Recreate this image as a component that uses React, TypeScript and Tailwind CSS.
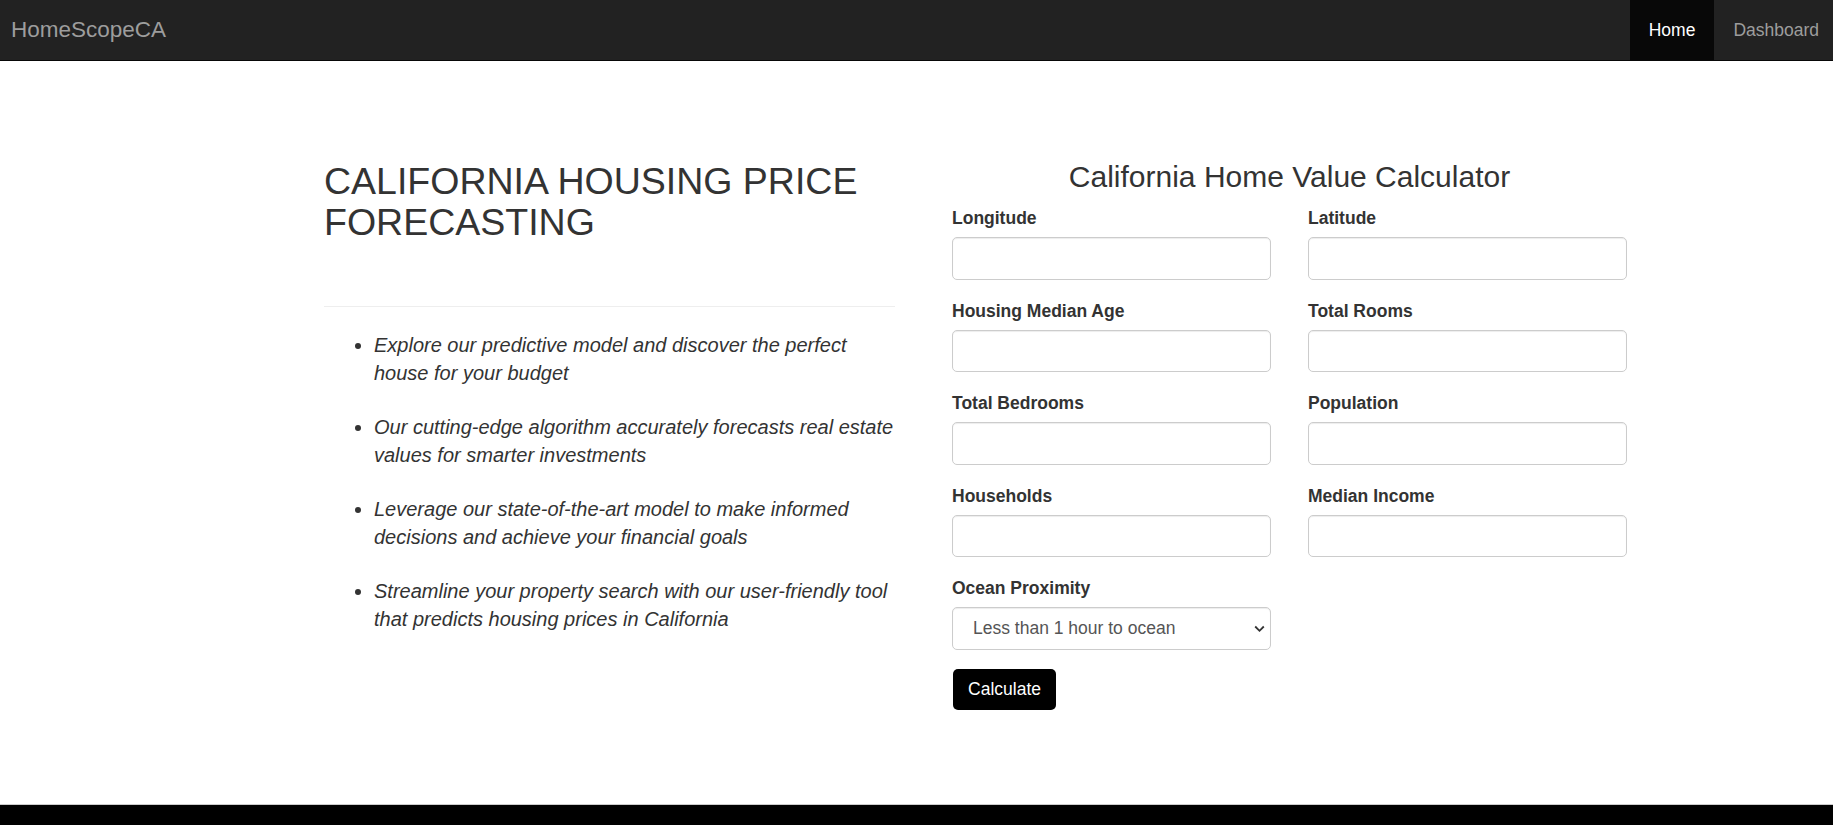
import React from "react";

const fields: [string, string][] = [
  ["Longitude", "Latitude"],
  ["Housing Median Age", "Total Rooms"],
  ["Total Bedrooms", "Population"],
  ["Households", "Median Income"],
];

function Field({ label }: { label: string }) {
  return (
    <div className="mb-[18.75px] w-[319px]">
      <label className="block text-[17.5px] leading-[25px] font-bold text-[#333] mb-[6.25px]">
        {label}
      </label>
      <input
        type="text"
        className="block w-full h-[42.5px] border border-[#ccc] rounded-[5px] bg-white shadow-[inset_0_1px_1px_rgba(0,0,0,0.075)] outline-none px-[15px] text-[17.5px]"
      />
    </div>
  );
}

const bullets: [string, string][] = [
  ["Explore our predictive model and discover the perfect", "house for your budget"],
  ["Our cutting-edge algorithm accurately forecasts real estate", "values for smarter investments"],
  ["Leverage our state-of-the-art model to make informed", "decisions and achieve your financial goals"],
  ["Streamline your property search with our user-friendly tool", "that predicts housing prices in California"],
];

export default function App() {
  return (
    <div className="w-full min-h-screen bg-white font-['Liberation_Sans',Arial,sans-serif] text-[#333] overflow-hidden">
      <nav className="h-[61px] bg-[#222] border-b border-[#080808] flex items-stretch justify-between">
        <div className="flex items-center pl-[11px] text-[22.5px] text-[#9d9d9d]">HomeScopeCA</div>
        <div className="flex items-stretch text-[17.5px]">
          <a className="flex items-center px-[19px] bg-[#080808] text-white">Home</a>
          <a className="flex items-center pl-[19px] pr-[14px] text-[#9d9d9d]">Dashboard</a>
        </div>
      </nav>

      <main className="h-[743px] flex pt-[100px] pl-[322px]">
        <div className="w-[573px]">
          <h1 className="text-[37.5px] leading-[41px] font-normal text-[#333] pl-[2px]">
            CALIFORNIA HOUSING PRICE FORECASTING
          </h1>
          <hr className="mt-[63px] ml-[2px] border-0 border-t border-[#eee]" />
          <ul className="list-disc pl-[52px] mt-[23.5px] italic text-[20px] leading-[28px] text-[#333]">
            {bullets.map(([a, b]) => (
              <li key={a} className="mb-[26px] whitespace-nowrap">
                {a}
                <br />
                {b}
              </li>
            ))}
          </ul>
        </div>

        <div className="ml-[57px] w-[675px]">
          <h2 className="-mt-[1px] text-[30px] leading-[33px] font-normal text-center text-[#333] mb-[13px]">
            California Home Value Calculator
          </h2>
          {fields.map(([a, b]) => (
            <div key={a} className="flex gap-[37px]">
              <Field label={a} />
              <Field label={b} />
            </div>
          ))}
          <div className="mb-[19px] w-[319px]">
            <label className="block text-[17.5px] leading-[25px] font-bold text-[#333] mb-[6.25px]">
              Ocean Proximity
            </label>
            <div className="relative">
              <select
                defaultValue="a"
                className="block w-full h-[42.5px] appearance-none border border-[#ccc] rounded-[5px] bg-white shadow-[inset_0_1px_1px_rgba(0,0,0,0.075)] outline-none pl-[20px] text-[17.5px] text-[#555]"
              >
                <option value="a">Less than 1 hour to ocean</option>
              </select>
              <svg
                className="absolute right-[6px] top-[18px] pointer-events-none"
                width="11"
                height="8"
                viewBox="0 0 11 8"
              >
                <path d="M1.2 1.5 L5.5 5.8 L9.8 1.5" fill="none" stroke="#333" strokeWidth="1.8" />
              </svg>
            </div>
          </div>
          <button className="ml-[1px] w-[103px] h-[41px] bg-black text-white text-[17.5px] rounded-[5px]">
            Calculate
          </button>
        </div>
      </main>

      <footer className="h-[60px] bg-black border-t border-[#ccc]" />
    </div>
  );
}
